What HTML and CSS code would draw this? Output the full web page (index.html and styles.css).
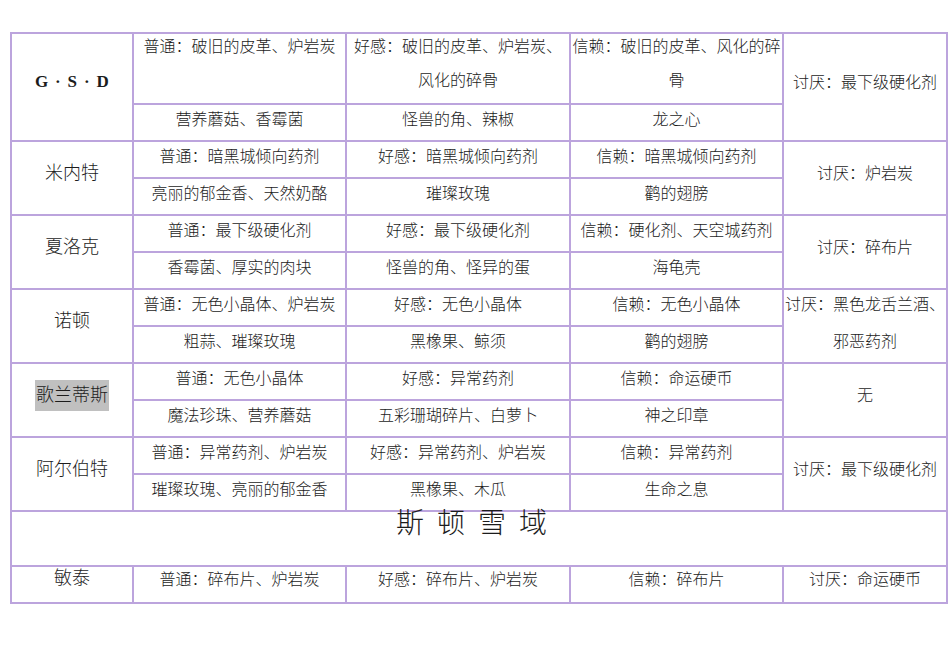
FILE: index.html
```html
<!DOCTYPE html>
<html lang="zh">
<head>
<meta charset="utf-8">
<title>好感度表</title>
<link rel="stylesheet" href="styles.css">
</head>
<body>
<div class="sheet">
  <div class="c name gsd">G · S · D</div>
  <div class="c top"><div class="t">普通：破旧的皮革、炉岩炭</div></div>
  <div class="c top"><div class="t">好感：破旧的皮革、炉岩炭、风化的碎骨</div></div>
  <div class="c top"><div class="t">信赖：破旧的皮革、风化的碎骨</div></div>
  <div class="c hate">讨厌：最下级硬化剂</div>
  <div class="c">营养蘑菇、香霉菌</div>
  <div class="c">怪兽的角、辣椒</div>
  <div class="c">龙之心</div>

  <div class="c name">米内特</div>
  <div class="c">普通：暗黑城倾向药剂</div>
  <div class="c">好感：暗黑城倾向药剂</div>
  <div class="c">信赖：暗黑城倾向药剂</div>
  <div class="c hate">讨厌：炉岩炭</div>
  <div class="c">亮丽的郁金香、天然奶酪</div>
  <div class="c">璀璨玫瑰</div>
  <div class="c">鹳的翅膀</div>

  <div class="c name">夏洛克</div>
  <div class="c">普通：最下级硬化剂</div>
  <div class="c">好感：最下级硬化剂</div>
  <div class="c">信赖：硬化剂、天空城药剂</div>
  <div class="c hate">讨厌：碎布片</div>
  <div class="c">香霉菌、厚实的肉块</div>
  <div class="c">怪兽的角、怪异的蛋</div>
  <div class="c">海龟壳</div>

  <div class="c name">诺顿</div>
  <div class="c">普通：无色小晶体、炉岩炭</div>
  <div class="c">好感：无色小晶体</div>
  <div class="c">信赖：无色小晶体</div>
  <div class="c hate two">讨厌：黑色龙舌兰酒、邪恶药剂</div>
  <div class="c">粗蒜、璀璨玫瑰</div>
  <div class="c">黑橡果、鲸须</div>
  <div class="c">鹳的翅膀</div>

  <div class="c name"><span class="hl">歌兰蒂斯</span></div>
  <div class="c">普通：无色小晶体</div>
  <div class="c">好感：异常药剂</div>
  <div class="c">信赖：命运硬币</div>
  <div class="c hate">无</div>
  <div class="c">魔法珍珠、营养蘑菇</div>
  <div class="c">五彩珊瑚碎片、白萝卜</div>
  <div class="c">神之印章</div>

  <div class="c name">阿尔伯特</div>
  <div class="c">普通：异常药剂、炉岩炭</div>
  <div class="c">好感：异常药剂、炉岩炭</div>
  <div class="c">信赖：异常药剂</div>
  <div class="c hate">讨厌：最下级硬化剂</div>
  <div class="c">璀璨玫瑰、亮丽的郁金香</div>
  <div class="c">黑橡果、木瓜</div>
  <div class="c">生命之息</div>

  <div class="c title">斯 顿 雪 域</div>

  <div class="c last lname">敏泰</div>
  <div class="c last">普通：碎布片、炉岩炭</div>
  <div class="c last">好感：碎布片、炉岩炭</div>
  <div class="c last">信赖：碎布片</div>
  <div class="c last">讨厌：命运硬币</div>
</div>
</body>
</html>
```

FILE: styles.css
```css
html, body {
  margin: 0;
  padding: 0;
  background: #ffffff;
}

body {
  font-family: "Liberation Serif", "Noto Sans CJK SC", serif;
  color: #1c1c1c;
}

.sheet {
  display: grid;
  grid-template-columns: 120px 211px 222px 211px 162px;
  grid-template-rows: 69px repeat(11, 35px) 53px 35px;
  gap: 2px;
  padding: 2px;
  background: #bca4dd;
  width: max-content;
  margin: 32px 0 0 10px;
}

.c {
  background: #ffffff;
  display: flex;
  align-items: center;
  justify-content: center;
  text-align: center;
  font-size: 16px;
  line-height: 20px;
  padding: 0 0 5px 0;
  box-sizing: border-box;
  font-weight: 300;
}

.top {
  align-items: flex-start;
  padding-bottom: 0;
  line-height: 34px;
}

.top .t {
  margin-top: -4px;
}

.name {
  grid-row: span 2;
  font-size: 18px;
  padding-bottom: 10px;
}

.gsd {
  font-weight: bold;
  font-size: 17px;
  letter-spacing: 1.3px;
  padding-left: 1px;
}

.hate {
  grid-row: span 2;
  padding-bottom: 8px;
}

.hate.two {
  line-height: 37px;
  padding-bottom: 7px;
}

.hl {
  display: inline-block;
  background: #c0c0c0;
  line-height: 31px;
  padding: 0 1px;
}

.title {
  grid-column: 1 / -1;
  align-items: flex-start;
  font-size: 28px;
  line-height: 24px;
  letter-spacing: 3px;
  padding: 0 12px 0 0;
}

.last {
  padding-bottom: 9px;
}

.lname {
  font-size: 18px;
  padding-bottom: 13px;
}
```
